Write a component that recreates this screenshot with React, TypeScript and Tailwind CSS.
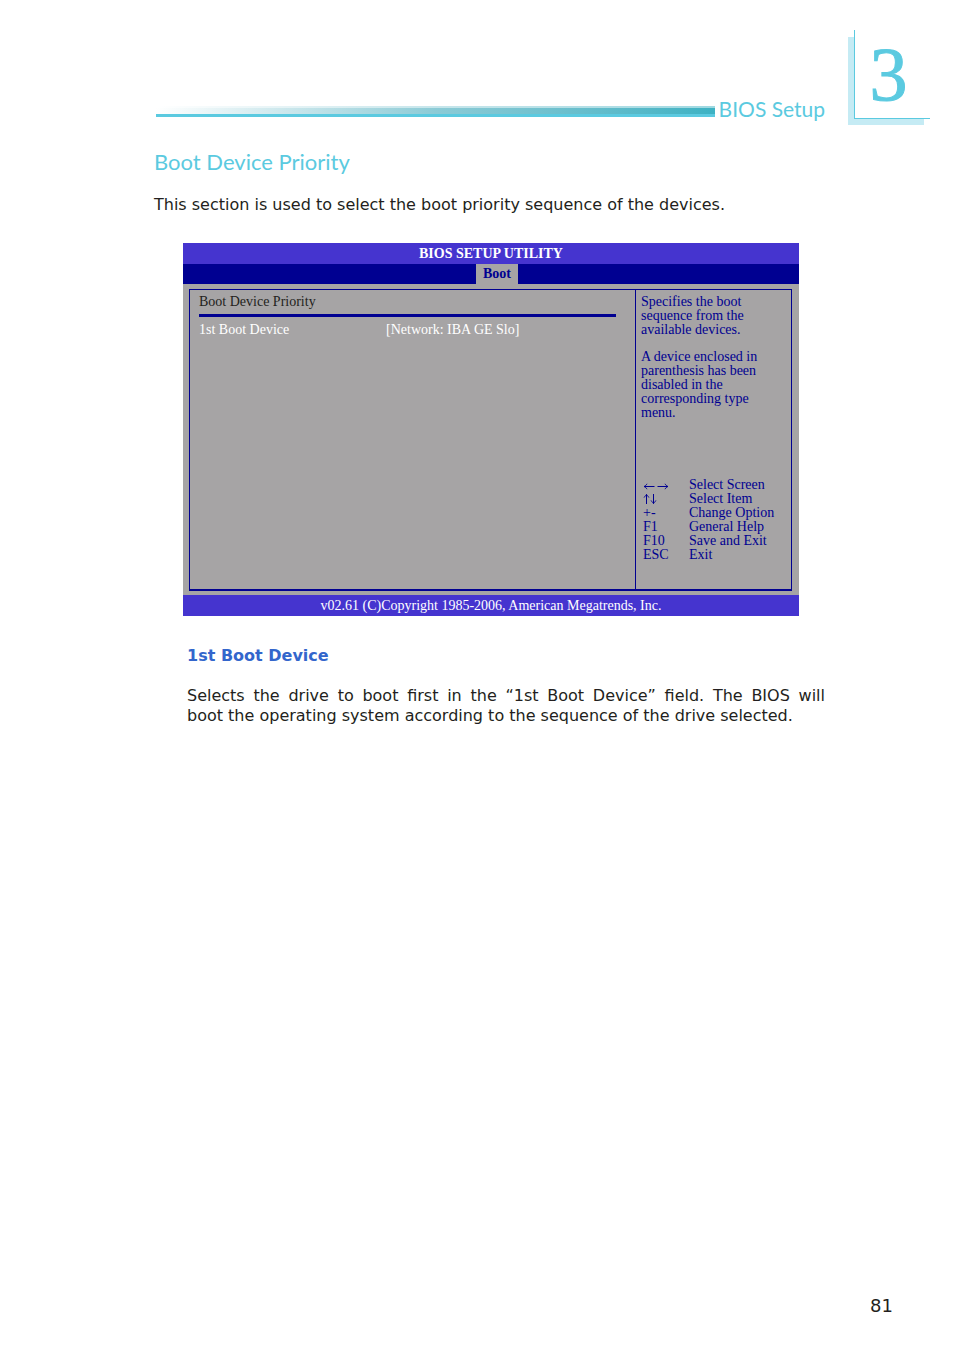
import type { ReactNode } from 'react'

function HorizontalArrow({ className }: { className?: string }) {
  return (
    <svg className={className} width="12" height="14" viewBox="0 0 12 14" fill="none" stroke="currentColor">
      <path d="M11.5 8.5H1M4 5.8C3.2 7.2 2.2 8.1 1 8.5C2.2 8.9 3.2 9.8 4 11.2" />
    </svg>
  )
}

function VerticalArrow({ className }: { className?: string }) {
  return (
    <svg className={className} width="7" height="14" viewBox="0 0 7 14" fill="none" stroke="currentColor">
      <path d="M3.5 12V2.5M.8 5.3C2.2 4.5 3.1 3.6 3.5 2.4C3.9 3.6 4.8 4.5 6.2 5.3" />
    </svg>
  )
}

const keyHelp: { id: string; keys: ReactNode; action: string }[] = [
  {
    id: 'screen',
    keys: (
      <span className="flex gap-0.5">
        <HorizontalArrow />
        <HorizontalArrow className="-scale-x-100" />
      </span>
    ),
    action: 'Select Screen',
  },
  {
    id: 'item',
    keys: (
      <span className="flex">
        <VerticalArrow />
        <VerticalArrow className="rotate-180" />
      </span>
    ),
    action: 'Select Item',
  },
  { id: 'change', keys: '+-', action: 'Change Option' },
  { id: 'f1', keys: 'F1', action: 'General Help' },
  { id: 'f10', keys: 'F10', action: 'Save and Exit' },
  { id: 'esc', keys: 'ESC', action: 'Exit' },
]

function PageHeader() {
  return (
    <header className="flex items-end pl-[156px] pr-6">
      <div className="mb-2 flex-1">
        <div className="h-2 border-t-2 border-white/50 bg-linear-to-r from-white via-[#8ccbd6] to-[#3db2c3] bg-origin-border" />
        <div className="h-[3px] bg-[#5bcae0]" />
      </div>
      <p className="ml-1 mr-[29px] font-[Lato,sans-serif] text-[21px] leading-8 text-[#5bcae0]">BIOS Setup</p>
      <div className="relative mb-[6px] h-[89px] w-[76px]">
        <div className="absolute -bottom-1.5 -left-1.5 right-1.5 top-[7px] bg-[#c5ebf4]" />
        <div className="relative flex h-full items-center justify-center border-b border-l border-[#5bcae0] bg-white pr-2 font-['Liberation_Serif',serif] text-[76px] leading-none text-[#5bcae0] [-webkit-text-stroke:1px]">
          3
        </div>
      </div>
    </header>
  )
}

function BiosScreen() {
  return (
    <section className="bg-[#a6a4a5] font-['Liberation_Serif',serif] text-[14px] leading-[14px] text-[#000091]">
      <h2 className="bg-[#4534cf] text-center font-bold leading-[21px] text-white">BIOS SETUP UTILITY</h2>
      <nav className="flex justify-center bg-[#000091] pl-3">
        <a href="#boot" className="bg-[#a6a4a5] px-[7px] font-bold leading-5">
          Boot
        </a>
      </nav>

      <div id="boot" className="pb-1 pl-[6px] pr-[7px] pt-[5px]">
        <div className="flex min-h-[302px] border border-b-2 border-[#000091]">
          <div className="flex-1 pl-[9px] pr-[19px] pt-[5px]">
            <h3 className="text-[#231f20]">Boot Device Priority</h3>
            <div className="mt-[5px] h-[3px] bg-[#000091]" />
            <dl className="mt-[6px] flex text-white">
              <dt className="w-[187px]">1st Boot Device</dt>
              <dd>[Network: IBA GE Slo]</dd>
            </dl>
          </div>

          <aside className="flex w-[156px] flex-col border-l border-[#000091] pb-[27px] pl-[5px] pt-[5px]">
            <p className="pr-6">Specifies the boot sequence from the available devices.</p>
            <p className="mt-[13px] pr-6">
              A device enclosed in parenthesis has been disabled in the corresponding type menu.
            </p>
            <table className="mt-auto ml-0.5 text-left">
              <tbody>
                {keyHelp.map((row) => (
                  <tr key={row.id}>
                    <th scope="row" className="w-[46px] p-0 font-normal">
                      {row.keys}
                    </th>
                    <td className="whitespace-nowrap p-0">{row.action}</td>
                  </tr>
                ))}
              </tbody>
            </table>
          </aside>
        </div>
      </div>

      <p className="bg-[#4534cf] text-center leading-[21px] text-white">
        v02.61 (C)Copyright 1985-2006, American Megatrends, Inc.
      </p>
    </section>
  )
}

export default function App() {
  return (
    <div className="flex min-h-screen flex-col bg-white pt-[30px] font-['DejaVu_Sans',sans-serif] text-[16px] leading-5 text-[#231f20]">
      <PageHeader />

      <main className="flex-1 pl-[154px]">
        <h1 className="mt-[21px] font-[Lato,sans-serif] text-[22px] leading-8 text-[#5bcae0]">Boot Device Priority</h1>
        <p className="mt-[17px]">This section is used to select the boot priority sequence of the devices.</p>

        <div className="ml-[29px] mr-[155px] mt-7">
          <BiosScreen />
        </div>

        <div className="ml-[33px] mr-[129px] mt-[30px]">
          <h3 className="font-bold text-[#3366cc]">1st Boot Device</h3>
          <p className="mt-5 text-justify">
            Selects the drive to boot first in the “1st Boot Device” field. The BIOS will boot&nbsp;the operating system
            according to the sequence of the drive selected.
          </p>
        </div>
      </main>

      <footer className="pb-[38px] pr-[61px] text-right text-[18px]">81</footer>
    </div>
  )
}
